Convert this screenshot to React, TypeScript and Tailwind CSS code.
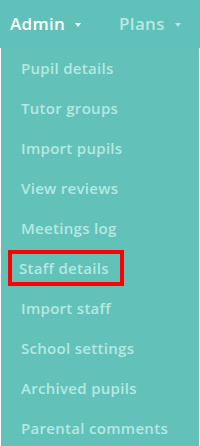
import React from "react";

const items = [
  "Pupil details",
  "Tutor groups",
  "Import pupils",
  "View reviews",
  "Meetings log",
  "Staff details",
  "Import staff",
  "School settings",
  "Archived pupils",
  "Parental comments",
];

function Caret() {
  return (
    <svg width="6" height="4" viewBox="0 0 6 4" className="ml-[10px] mt-[1px]">
      <path d="M0 0 L6 0 L3 4 Z" fill="currentColor" />
    </svg>
  );
}

export default function App() {
  return (
    <div className="h-[446px] w-[200px] overflow-hidden bg-white" style={{ fontFamily: "'Open Sans', 'Noto Sans', sans-serif" }}>
      <nav className="flex h-[48px] items-center bg-[#5fc1b9] pl-[10px]">
        <div className="flex items-center text-[17px] font-semibold tracking-[0.3px] text-white">
          Admin
          <Caret />
        </div>
        <div className="ml-[38px] flex items-center text-[17px] font-semibold tracking-[0.3px] text-[#b8e9e2]">
          Plans
          <Caret />
        </div>
      </nav>
      <ul className="ml-[1px] w-[198px] rounded-b-[5px] bg-[#62c2ba] pb-[6px]">
        {items.map((item) => (
          <li key={item} className="flex h-[40px] items-center px-[8px]">
            <span
              className={
                item === "Staff details"
                  ? "-ml-[1px] flex h-[36px] w-[116px] items-center border-[4px] border-[#ff0000] pl-[7px] text-[15px] font-semibold tracking-[0.3px] text-[#b5e9e1]"
                  : "pl-[12px] text-[15px] font-semibold tracking-[0.3px] text-[#b5e9e1]"
              }
            >
              {item}
            </span>
          </li>
        ))}
      </ul>
    </div>
  );
}
